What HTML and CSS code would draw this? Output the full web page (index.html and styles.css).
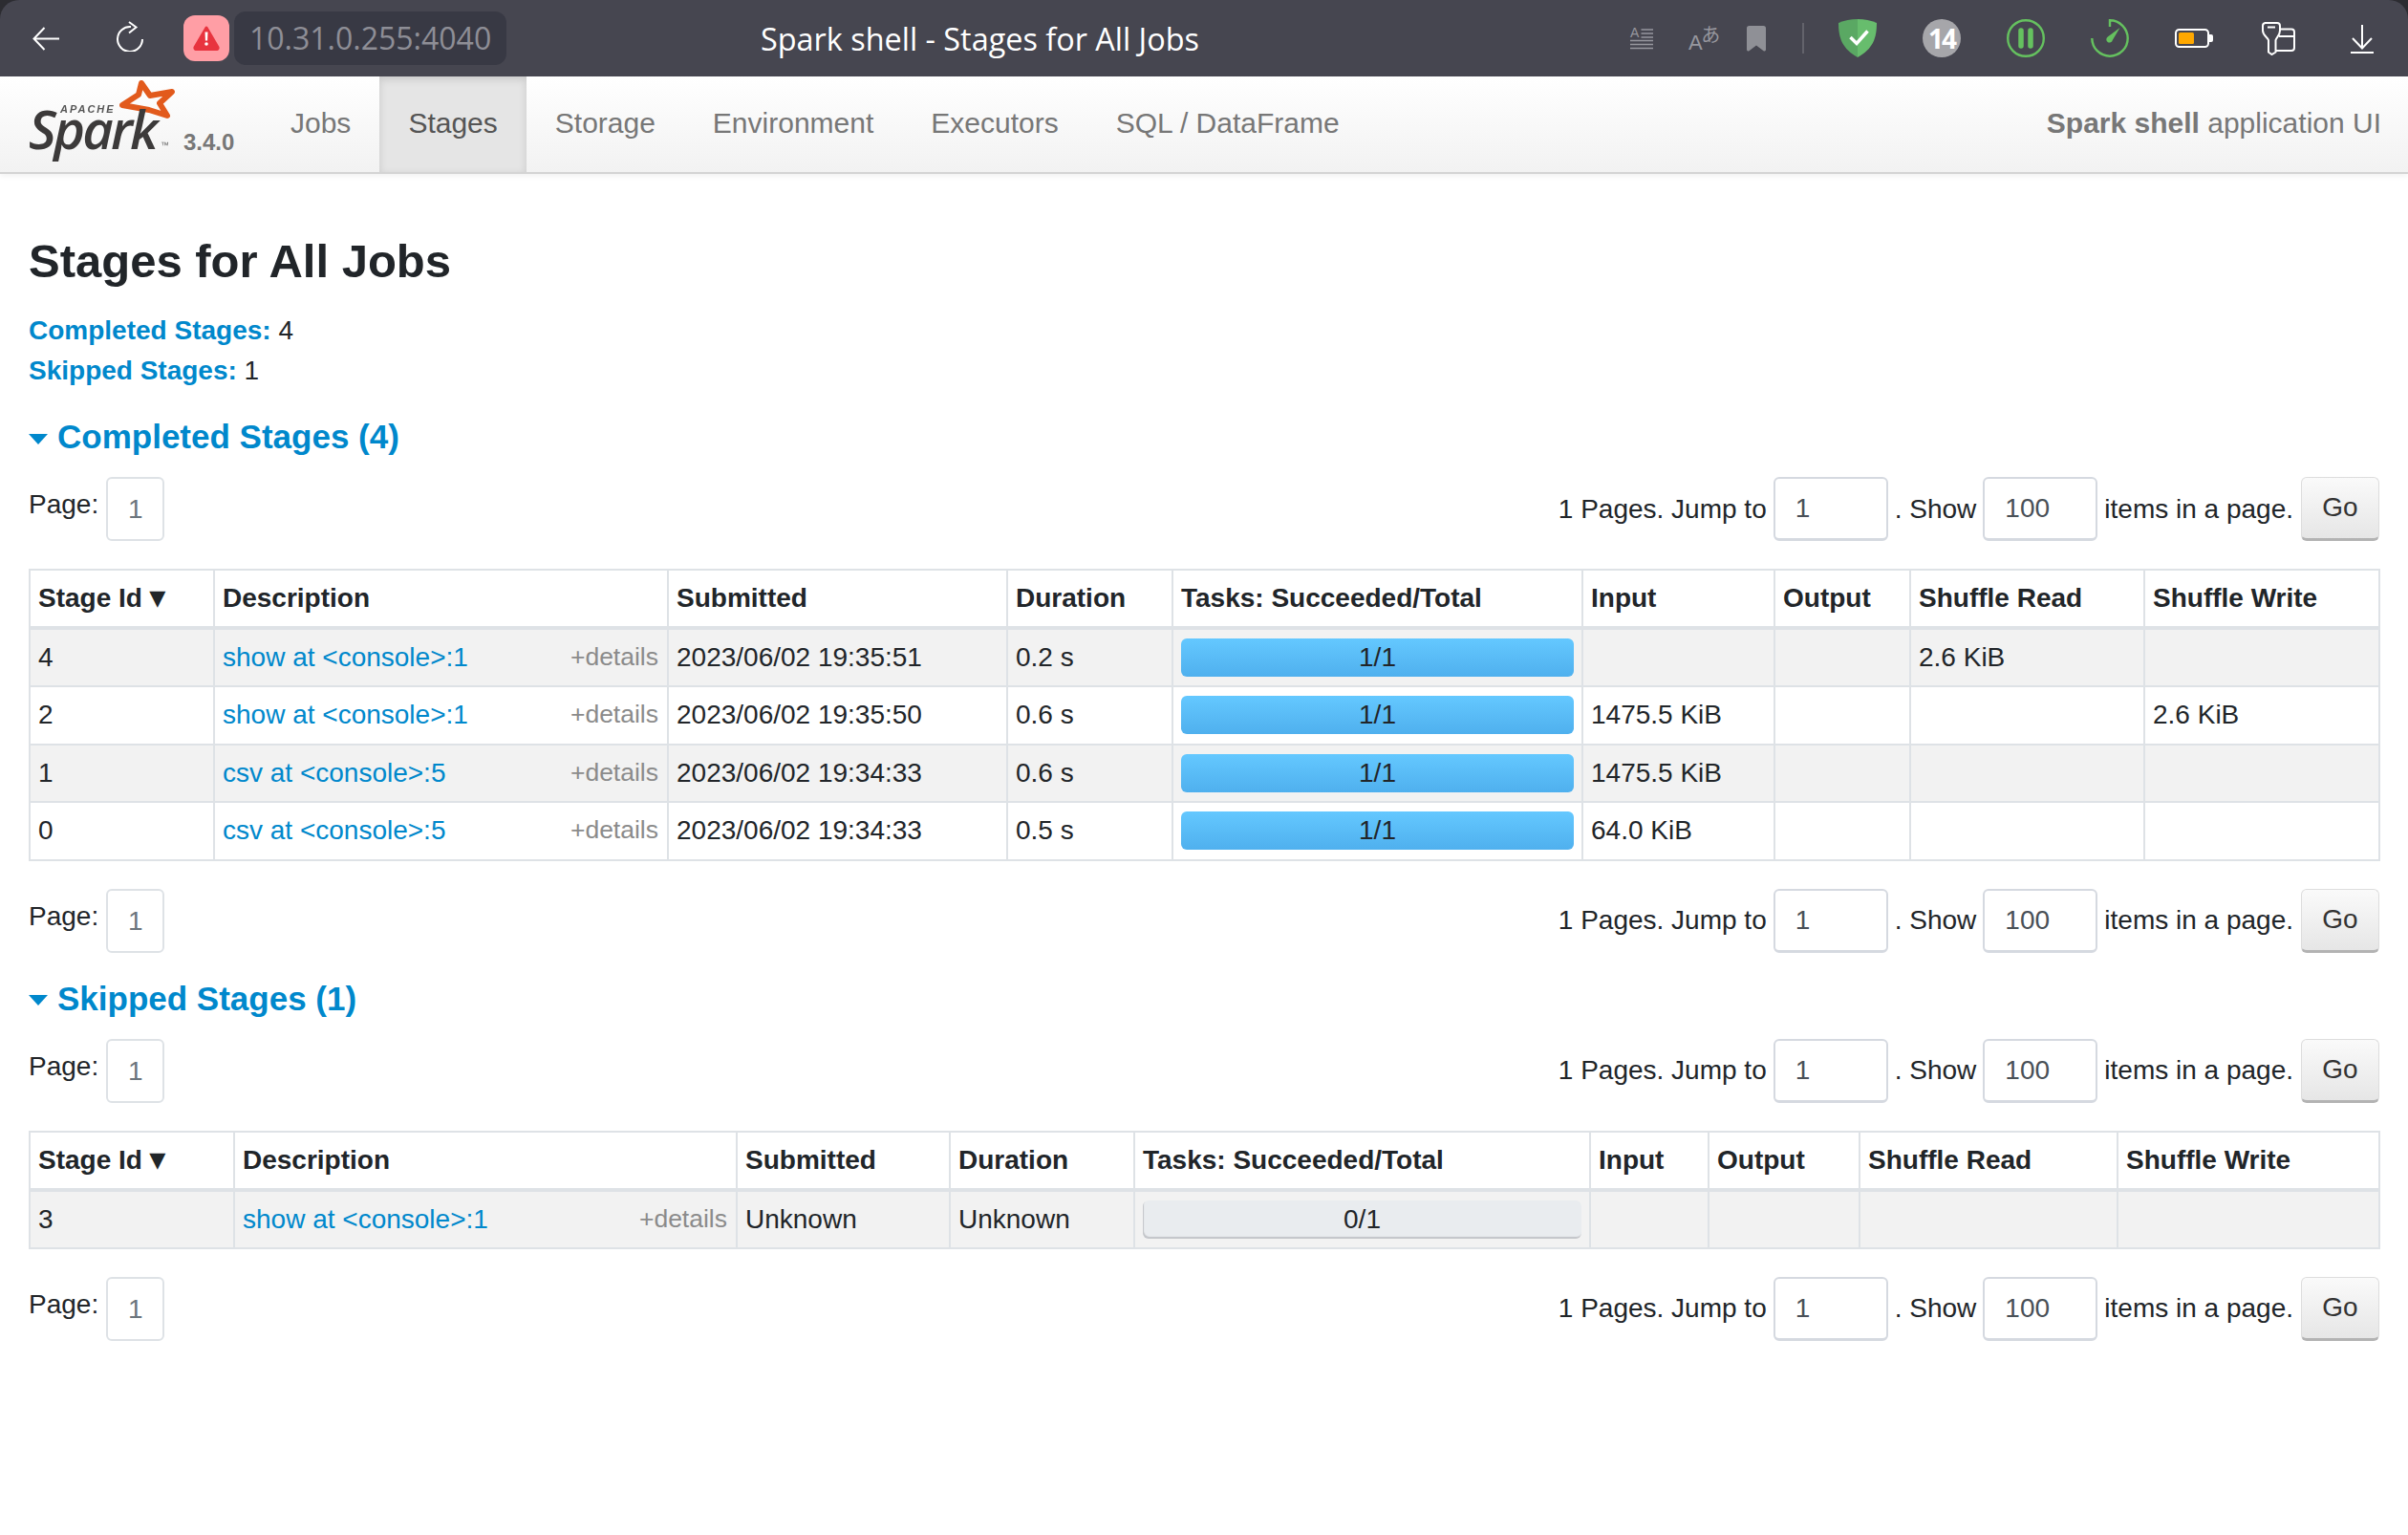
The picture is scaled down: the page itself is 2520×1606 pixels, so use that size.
FILE: index.html
```html
<!DOCTYPE html>
<html lang="en">
<head>
<meta charset="utf-8">
<title>Spark shell - Stages for All Jobs</title>
<link rel="stylesheet" href="styles.css">
</head>
<body>
<div class="chrome">
<header class="browser">
  <div class="browser-left">
    <svg class="ico back" viewBox="0 0 28 25"><path d="M28 12.500H2M12.500 1 1.500 12.500 12.500 24" fill="none" stroke="#fff" stroke-width="2"/></svg>
    <svg class="ico reload" viewBox="0 0 28 32"><path d="M15 6A13 13 0 1 0 27 19M13 1l7.500 5.500L13 12.500" fill="none" stroke="#fff" stroke-width="2"/></svg>
    <span class="warn"><svg viewBox="0 0 28 26"><path d="M14 2 26 22.500a1.500 1.500 0 0 1-1 2H3a1.500 1.500 0 0 1-1-2Z" fill="#e8343f" stroke="#e8343f" stroke-width="3" stroke-linejoin="round"/><path d="M12.500 6.500h3l-.4 9h-2.200Z" fill="#fff"/><circle cx="14" cy="19" r="1.800" fill="#fff"/></svg></span>
    <span class="url">10.31.0.255:4040</span>
  </div>
  <div class="browser-title">Spark shell - Stages for All Jobs</div>
  <div class="browser-right">
    <span class="ico i-reader">
      <span class="reader-a">A</span>
      <svg viewBox="0 0 24 23"><path d="M11.500 2H24M11.500 6H24M11.500 10H24M0 13.500h24M0 17.500h24M0 21.500h24" stroke="#97979e" stroke-width="1.700"/></svg>
    </span>
    <span class="ico i-trans"><span class="t-a">A</span><span class="t-j">あ</span></span>
    <svg class="ico i-mark" viewBox="0 0 20 27"><path d="M2.500 0h15A2.500 2.500 0 0 1 20 2.500V25a1.500 1.500 0 0 1-2.400 1.200L10 20.500l-7.600 5.700A1.500 1.500 0 0 1 0 25V2.500A2.500 2.500 0 0 1 2.500 0Z" fill="#8f9096"/></svg>
    <span class="sep"></span>
    <svg class="ico i-shield" viewBox="0 0 40 40"><path d="M20 0c7 0 14 1.500 20 4 0 16-4 27-20 36Z" fill="#67bd6d"/><path d="M20 0C13 0 6 1.500 0 4c0 16 4 27 20 36Z" fill="#5aa863"/><path d="M12.500 19l6.500 6.500L30.500 12.500" fill="none" stroke="#fff" stroke-width="3.500"/></svg>
    <span class="i-badge">14</span>
    <svg class="ico i-pause" viewBox="0 0 40 40"><circle cx="20" cy="20" r="18.800" fill="none" stroke="#65c15f" stroke-width="2.400"/><path d="M15 12v16M25 12v16" stroke="#65c15f" stroke-width="5.500" stroke-linecap="round"/></svg>
    <svg class="ico i-gauge" viewBox="0 0 40 40"><path d="M20 8V1.300A18.700 18.700 0 1 1 1.300 20" fill="none" stroke="#65c15f" stroke-width="2.400"/><path d="M30.500 9 22.800 22a3.300 3.300 0 1 1-5-3.500Z" fill="#65c15f"/></svg>
    <svg class="ico i-batt" viewBox="0 0 40 20"><rect x="1" y="1" width="34" height="18" rx="3.500" fill="none" stroke="#fff" stroke-width="2"/><rect x="4" y="4" width="16" height="12" rx="1.500" fill="#ffa800"/><path d="M36 6h2a2 2 0 0 1 2 2v4a2 2 0 0 1-2 2h-2Z" fill="#fff"/></svg>
    <svg class="ico i-ext" viewBox="0 0 35 35"><path d="M3.500 1h12.500a3 3 0 0 1 3 3v5c0 5-3.500 7-4.500 10v12.500L10.500 34 7 31.500V19C6 16 1 14 1 9V4a3 3 0 0 1 2.500-3ZM6 5.500h8M19 7.500h12a3 3 0 0 1 3 3V27a3 3 0 0 1-3 3H14.500M18 15h16" fill="none" stroke="#fff" stroke-width="2"/></svg>
    <svg class="ico i-down" viewBox="0 0 24 30"><path d="M12 0v24.500M2 14l10 10.500L22 14M0 29h24" fill="none" stroke="#fff" stroke-width="2"/></svg>
  </div>
</header>
</div>

<nav class="navbar">
  <div class="brand">
    <span class="logo">
      <svg class="logo-star" viewBox="0 0 60 56"><path d="M24 5 33 18 56 14 43 26 51 39 32 33 4 28 21 17Z" fill="none" stroke="#e25a1c" stroke-width="6" stroke-linejoin="round"/></svg>
      <span class="logo-apache">APACHE</span>
      <span class="logo-spark">Spark</span>
      <span class="logo-tm">™</span>
    </span>
    <span class="version">3.4.0</span>
  </div>
  <ul class="nav-items">
    <li>Jobs</li>
    <li class="active">Stages</li>
    <li>Storage</li>
    <li>Environment</li>
    <li>Executors</li>
    <li>SQL / DataFrame</li>
  </ul>
  <p class="app-name"><strong>Spark shell</strong> application UI</p>
</nav>

<main class="content">
  <h3 class="page-title">Stages for All Jobs</h3>
  <ul class="summary">
    <li><a href="#c"><strong>Completed Stages:</strong></a> 4</li>
    <li><a href="#s"><strong>Skipped Stages:</strong></a> 1</li>
  </ul>

  <h4 class="section-head" id="c"><span class="caret"></span>Completed Stages (4)</h4>
  <div class="pager first">
    <div class="pager-left"><span>Page:</span><span class="page-num">1</span></div>
    <div class="pager-right"><span>1 Pages. Jump to</span><span class="box jump">1</span><span>. Show</span><span class="box show">100</span><span>items in a page.</span><span class="go">Go</span></div>
  </div>
  <table class="stages t1">
    <colgroup><col class="a1"><col class="a2"><col class="a3"><col class="a4"><col class="a5"><col class="a6"><col class="a7"><col class="a8"><col class="a9"></colgroup>
    <thead><tr><th>Stage Id <span class="sort">▾</span></th><th>Description</th><th>Submitted</th><th>Duration</th><th>Tasks: Succeeded/Total</th><th>Input</th><th>Output</th><th>Shuffle Read</th><th>Shuffle Write</th></tr></thead>
    <tbody>
      <tr><td>4</td><td class="desc"><a href="#4">show at &lt;console&gt;:1</a><span class="more">+details</span></td><td>2023/06/02 19:35:51</td><td>0.2 s</td><td><div class="bar done">1/1</div></td><td></td><td></td><td>2.6 KiB</td><td></td></tr>
      <tr><td>2</td><td class="desc"><a href="#2">show at &lt;console&gt;:1</a><span class="more">+details</span></td><td>2023/06/02 19:35:50</td><td>0.6 s</td><td><div class="bar done">1/1</div></td><td>1475.5 KiB</td><td></td><td></td><td>2.6 KiB</td></tr>
      <tr><td>1</td><td class="desc"><a href="#1">csv at &lt;console&gt;:5</a><span class="more">+details</span></td><td>2023/06/02 19:34:33</td><td>0.6 s</td><td><div class="bar done">1/1</div></td><td>1475.5 KiB</td><td></td><td></td><td></td></tr>
      <tr><td>0</td><td class="desc"><a href="#0">csv at &lt;console&gt;:5</a><span class="more">+details</span></td><td>2023/06/02 19:34:33</td><td>0.5 s</td><td><div class="bar done">1/1</div></td><td>64.0 KiB</td><td></td><td></td><td></td></tr>
    </tbody>
  </table>
  <div class="pager after">
    <div class="pager-left"><span>Page:</span><span class="page-num">1</span></div>
    <div class="pager-right"><span>1 Pages. Jump to</span><span class="box jump">1</span><span>. Show</span><span class="box show">100</span><span>items in a page.</span><span class="go">Go</span></div>
  </div>

  <h4 class="section-head second" id="s"><span class="caret"></span>Skipped Stages (1)</h4>
  <div class="pager first">
    <div class="pager-left"><span>Page:</span><span class="page-num">1</span></div>
    <div class="pager-right"><span>1 Pages. Jump to</span><span class="box jump">1</span><span>. Show</span><span class="box show">100</span><span>items in a page.</span><span class="go">Go</span></div>
  </div>
  <table class="stages t2">
    <colgroup><col class="b1"><col class="b2"><col class="b3"><col class="b4"><col class="b5"><col class="b6"><col class="b7"><col class="b8"><col class="b9"></colgroup>
    <thead><tr><th>Stage Id <span class="sort">▾</span></th><th>Description</th><th>Submitted</th><th>Duration</th><th>Tasks: Succeeded/Total</th><th>Input</th><th>Output</th><th>Shuffle Read</th><th>Shuffle Write</th></tr></thead>
    <tbody>
      <tr><td>3</td><td class="desc"><a href="#3">show at &lt;console&gt;:1</a><span class="more">+details</span></td><td>Unknown</td><td>Unknown</td><td><div class="bar idle">0/1</div></td><td></td><td></td><td></td><td></td></tr>
    </tbody>
  </table>
  <div class="pager after">
    <div class="pager-left"><span>Page:</span><span class="page-num">1</span></div>
    <div class="pager-right"><span>1 Pages. Jump to</span><span class="box jump">1</span><span>. Show</span><span class="box show">100</span><span>items in a page.</span><span class="go">Go</span></div>
  </div>
</main>
</body>
</html>
```
FILE: styles.css
```css
* { box-sizing: border-box; }
html { background: #fff; }
body { margin: 0; font-family: "Liberation Sans", Arial, sans-serif; font-size: 28px; line-height: 42px; color: #212529; background: #fff; }
a { color: #0088cc; text-decoration: none; }

.chrome { background: #2c2c31; }
.browser { height: 80px; background: #464650; border-radius: 20px 20px 0 0; display: flex; align-items: center; justify-content: space-between; position: relative; }
.browser-left { display: flex; align-items: center; height: 100%; padding-left: 34px; }
.ico { display: block; flex: none; }
.back { width: 28px; height: 25px; margin-top: 1px; }
.reload { width: 28px; height: 32px; margin-left: 60px; margin-bottom: 4px; }
.warn { width: 48px; height: 48px; background: #ff9ea5; border-radius: 12px; margin-left: 42px; display: flex; align-items: center; justify-content: center; }
.warn svg { width: 28px; height: 26px; }
.url { width: 285px; height: 56px; margin-left: 5px; padding-left: 16px; background: #383944; border-radius: 12px; color: #8e8e96; font-family: "Open Sans", sans-serif; font-size: 32px; line-height: 56px; }
.browser-title { position: absolute; left: 796px; top: 0; line-height: 80px; color: #fff; font-family: "Open Sans", sans-serif; font-size: 32.400px; }
.browser-right { display: flex; align-items: center; height: 100%; padding-right: 36px; }
.i-reader { width: 24px; height: 23px; position: relative; }
.i-reader svg { display: block; width: 24px; height: 23px; }
.reader-a { position: absolute; left: 0; top: -1px; font-size: 14px; line-height: 13px; color: #97979e; }
.i-trans { width: 31px; height: 26px; margin-left: 37px; display: flex; color: #97979e; }
.t-a { font-size: 22px; line-height: 16px; align-self: flex-end; }
.t-j { font-family: "Noto Sans CJK JP", sans-serif; font-size: 20px; line-height: 20px; margin-left: -1.500px; margin-top: -1px; }
.i-mark { width: 20px; height: 27px; margin-left: 30px; }
.sep { width: 2px; height: 32px; background: #63636b; margin-left: 38px; margin-right: 36px; }
.i-shield { width: 40px; height: 40px; }
.i-badge { width: 40px; height: 40px; margin-left: 48px; border-radius: 50%; background: #a6a6aa; color: #fff; font-family: "Open Sans", sans-serif; font-weight: 700; font-size: 28px; line-height: 40px; text-align: center; letter-spacing: -2px; }
.i-pause { width: 40px; height: 40px; margin-left: 48px; }
.i-gauge { width: 40px; height: 40px; margin-left: 48px; }
.i-batt { width: 40px; height: 20px; margin-left: 48px; }
.i-ext { width: 35px; height: 35px; margin-left: 51px; }
.i-down { width: 24px; height: 30px; margin-left: 58px; margin-top: 2px; }

.navbar { height: 102px; background: linear-gradient(#fff, #f2f2f2); border-bottom: 2px solid #d4d4d4; box-shadow: 0 2px 6px rgba(0,0,0,.06); display: flex; align-items: stretch; padding: 0 28px 0 28px; }
.brand { width: 246px; position: relative; flex: none; }
.logo { position: absolute; left: 0; top: 0; width: 160px; height: 84px; display: block; filter: blur(.5px); }
.logo-star { position: absolute; left: 96px; top: 2px; width: 60px; height: 56px; }
.logo-apache { position: absolute; left: 35px; top: 29px; font-size: 11px; line-height: 10px; font-weight: 700; font-style: italic; letter-spacing: 2px; color: #555; }
.logo-spark { position: absolute; left: 2px; top: 39px; font-family: "Open Sans", sans-serif; font-size: 56px; line-height: 30px; font-style: italic; font-weight: 600; letter-spacing: -2.800px; color: #3c3a3a; }
.logo-tm { position: absolute; left: 140px; top: 68px; font-size: 9px; line-height: 8px; color: #666; }
.version { position: absolute; left: 164px; top: 51px; font-size: 24px; line-height: 36px; font-weight: 700; color: #777; }
.nav-items { list-style: none; margin: 0; padding: 0; display: flex; font-size: 30px; line-height: 98px; color: #777; }
.nav-items li { padding: 0 30px; }
.nav-items .active { color: #555; background: #e5e5e5; box-shadow: inset 0 3px 8px rgba(0,0,0,.125); }
.app-name { margin: 0 0 0 auto; font-size: 30px; line-height: 98px; color: #777; }

.content { padding: 0 30px; }
.page-title { margin: 0; padding-top: 61px; font-size: 49px; line-height: 60px; font-weight: 700; }
.summary { list-style: none; margin: 22px 0 0; padding: 0; }
.section-head { margin: 27px 0 0; font-size: 35px; line-height: 42px; font-weight: 700; color: #0088cc; display: flex; align-items: center; }
.section-head.second { margin-top: 27px; }
.caret { width: 0; height: 0; border-left: 10px solid transparent; border-right: 10px solid transparent; border-top: 11px solid #0088cc; margin: 4px 10px 0 0; }

.pager { display: flex; justify-content: space-between; height: 67px; }
.pager.first { margin-top: 21px; }
.pager.after { margin-top: 29px; }
.pager-left { display: flex; gap: 8px; align-items: flex-start; }
.pager-left > span:first-child { margin-top: 8px; }
.page-num { width: 61px; height: 67px; border: 2px solid #dee2e6; border-radius: 6px; text-align: center; line-height: 63px; color: #6c757d; }
.pager-right { display: flex; align-items: center; gap: 8px; }
.box { height: 67px; width: 120px; margin: 0 -1px; padding-left: 21px; border: 2px solid #d5d9e0; border-bottom-width: 3px; border-radius: 6px; line-height: 61px; color: #495057; }
.go { width: 82px; height: 67px; border: 1px solid #ddd; border-bottom: 3px solid #b3b3b3; border-radius: 6px; text-align: center; line-height: 61px; background: linear-gradient(#fafafa, #e6e6e6); color: #333; }

.stages { width: 2459px; table-layout: fixed; border-collapse: collapse; margin-top: 29px; }
.stages th, .stages td { border: 2px solid #dee2e6; padding: 8px; text-align: left; overflow: hidden; white-space: nowrap; }
.stages th { height: 60px; font-weight: 700; color: #212529; border-bottom-width: 4px; }
.stages td { height: 60.500px; }
.stages tbody tr:nth-child(odd) td { background: #f2f2f2; }
.sort { font-size: 31px; line-height: 1; }
.desc { position: relative; }
.more { position: absolute; right: 9px; top: 7px; color: #8b8b8b; font-size: 26.500px; }
.bar { height: 40px; line-height: 40px; text-align: center; border-radius: 6px; font-size: 28px; }
.bar.done { background: linear-gradient(#64c8ff, #4fb0ee); }
.bar.idle { background: #e9ecef; box-shadow: inset 1px -2px 1px #c3c5c9; }

.a1 { width: 193px; } .a2 { width: 475px; } .a3 { width: 355px; } .a4 { width: 173px; } .a5 { width: 429px; } .a6 { width: 201px; } .a7 { width: 142px; } .a8 { width: 245px; } .a9 { width: 246px; }
.b1 { width: 214px; } .b2 { width: 526px; } .b3 { width: 223px; } .b4 { width: 193px; } .b5 { width: 477px; } .b6 { width: 124px; } .b7 { width: 158px; } .b8 { width: 270px; } .b9 { width: 274px; }
```
